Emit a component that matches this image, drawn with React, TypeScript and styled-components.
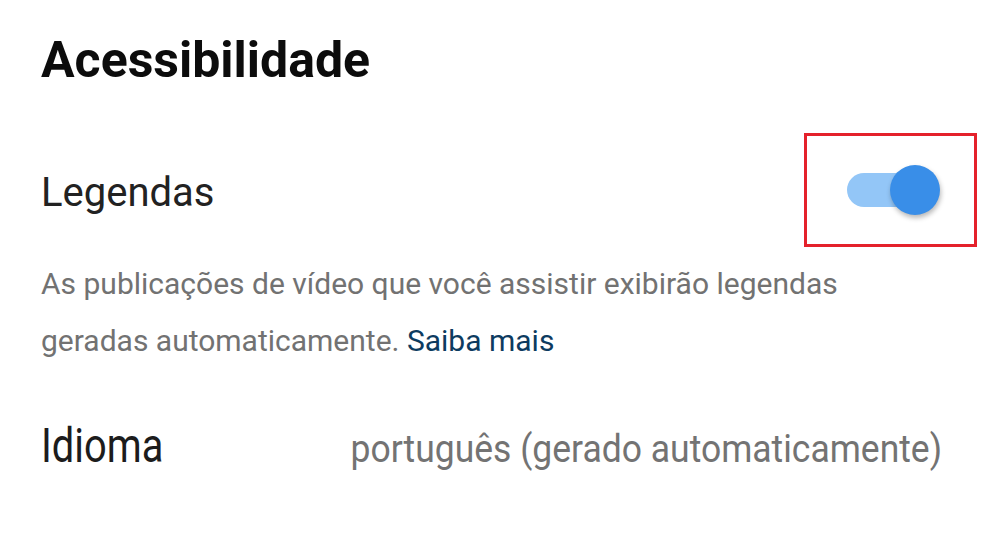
import * as React from 'react'
import styled, { createGlobalStyle } from 'styled-components'

const GlobalStyle = createGlobalStyle`
    html, body {
        margin: 0;
        padding: 0;
        background: #ffffff;
    }
    body {
        font-family: Roboto, "Noto Sans", "Liberation Sans", sans-serif;
        -webkit-font-smoothing: antialiased;
    }
`

const Page = styled.div`
    width: 984px;
    height: 548px;
    overflow: hidden;
    display: flex;
    flex-direction: column;
    padding: 30px 7px 0 41px;
    box-sizing: border-box;
`

const Title = styled.h1`
    margin: 0;
    font-size: 50px;
    line-height: 60px;
    font-weight: 700;
    color: #0c0c0c;
    letter-spacing: 0;
`

const SettingRow = styled.div`
    display: flex;
    align-items: center;
    justify-content: space-between;
    margin-top: 43px;
`

const Label = styled.span`
    font-size: 40px;
    line-height: 48px;
    color: #222222;
    padding-top: 6px;
`

const Highlight = styled.div`
    width: 173px;
    height: 114px;
    box-sizing: border-box;
    border: 3px solid #e4212b;
    display: flex;
    align-items: center;
    padding-left: 40px;
`

const SwitchTrack = styled.div<{ $on: boolean }>`
    position: relative;
    width: 83px;
    height: 34px;
    border-radius: 17px;
    background: ${p => (p.$on ? '#93c6f7' : '#bdbdbd')};
`

const SwitchThumb = styled.div<{ $on: boolean }>`
    position: absolute;
    top: 50%;
    left: ${p => (p.$on ? '43px' : '-8px')};
    width: 50px;
    height: 50px;
    margin-top: -25px;
    border-radius: 50%;
    background: ${p => (p.$on ? '#398ee8' : '#fafafa')};
    box-shadow: 1px 3px 5px rgba(0, 0, 0, 0.28);
`

const Description = styled.p`
    margin: 8px 0 0;
    width: 900px;
    font-size: 30px;
    line-height: 57px;
    color: #727272;
`

const MoreLink = styled.a`
    color: #0d3b60;
    text-decoration: none;
`

const LanguageRow = styled.div`
    display: flex;
    align-items: baseline;
    justify-content: space-between;
    padding-right: 35px;
    margin-top: 49px;
`

const LanguageLabel = styled.span`
    font-size: 48px;
    line-height: 56px;
    color: #1c1c1c;
    transform: scaleX(0.83);
    transform-origin: left center;
`

const LanguageValue = styled.span`
    font-size: 39px;
    line-height: 56px;
    color: #737373;
    white-space: nowrap;
    transform: scaleX(0.91);
    transform-origin: right center;
`

export default function App() {
    const [captions, setCaptions] = React.useState(true)

    return (
        <Page>
            <GlobalStyle />
            <Title>Acessibilidade</Title>
            <SettingRow>
                <Label>Legendas</Label>
                <Highlight>
                    <SwitchTrack $on={captions} onClick={() => setCaptions(!captions)}>
                        <SwitchThumb $on={captions} />
                    </SwitchTrack>
                </Highlight>
            </SettingRow>
            <Description>
                As publicações de vídeo que você assistir exibirão legendas
                <br />
                geradas automaticamente. <MoreLink href="#">Saiba mais</MoreLink>
            </Description>
            <LanguageRow>
                <LanguageLabel>Idioma</LanguageLabel>
                <LanguageValue>português (gerado automaticamente)</LanguageValue>
            </LanguageRow>
        </Page>
    )
}
